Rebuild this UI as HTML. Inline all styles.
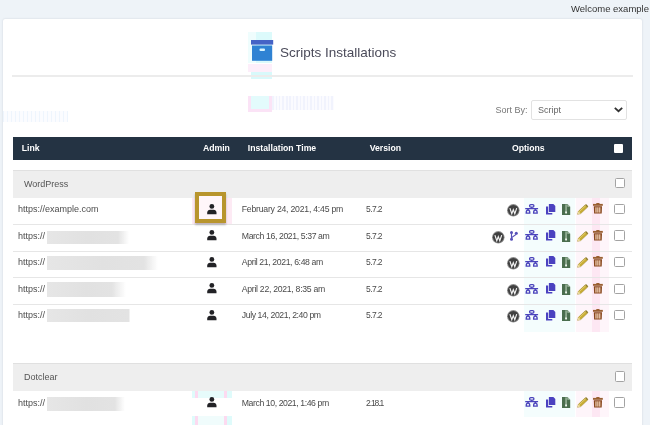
<!DOCTYPE html>
<html><head><meta charset="utf-8">
<style>
*{box-sizing:border-box;margin:0;padding:0}
html,body{width:650px;height:425px;overflow:hidden;background:#eef3f8;font-family:"Liberation Sans",sans-serif;position:relative}
.a{position:absolute;white-space:nowrap}
#welcome{left:571px;top:3px;font-size:9.5px;color:#333;line-height:11px}
#panel{left:3px;top:18.5px;width:638.5px;height:420px;background:#fff;border-radius:2px;box-shadow:0 0 2px rgba(100,110,130,.28)}
#title{left:280px;top:45px;font-size:13.5px;color:#4b4b5a;line-height:16px}
#hr{left:12px;top:75px;width:620.5px;height:2px;background:#ececec}
#sortlbl{left:495.5px;top:104.7px;font-size:9px;color:#777;line-height:11px}
#sel{left:531px;top:100px;width:96px;height:19.5px;border:1px solid #e2e2e2;border-radius:2px;background:#fff}
#seltxt{left:538px;top:105.2px;font-size:9px;color:#666;line-height:11px}
#thead{left:12.5px;top:137px;width:619.5px;height:22.5px;background:#243343}
.th{font-weight:bold;font-size:8.7px;color:#fff;line-height:11px;top:142.5px}
.grp{left:12.5px;width:619.5px;background:#eeeeee;border-top:1px solid #e0e0e0}
.gname{font-size:9px;color:#555;line-height:11px;left:24px}
.row{left:12.5px;width:619.5px;border-bottom:1px solid #e4e4e4}
.lnk{left:18px;font-size:9px;color:#4d4d4d;line-height:11px}
.blur{left:46.8px;filter:blur(0.7px)}
.dt{left:241.8px;font-size:8.7px;color:#4a4a4a;line-height:11px;letter-spacing:-0.42px}
.ver{left:366px;font-size:8.5px;color:#4a4a4a;line-height:11px;letter-spacing:-0.6px}
.cb{width:10.5px;height:10.5px;border:1px solid #a3a3a3;border-radius:1.5px;background:#fff}
svg.a{overflow:visible}
</style></head><body><div id="wrap" style="position:absolute;left:0;top:0;width:650px;height:425px;overflow:hidden;will-change:transform">
<div class="a" id="welcome">Welcome example</div>
<div class="a" id="panel"></div>


<!-- faint compression ghosts -->
<div class="a" style="left:248.4px;top:31.7px;width:23.5px;height:31.3px;background:#effdfd"></div>
<div class="a" style="left:256px;top:31.7px;width:16px;height:31.3px;background:#dcfafb"></div>
<div class="a" style="left:248.4px;top:64px;width:23.5px;height:8px;background:#fdeefa"></div>
<div class="a" style="left:251px;top:72px;width:21px;height:7px;background:#d8f9fb"></div>
<div class="a" style="left:248.4px;top:95.5px;width:23.5px;height:16.5px;border:3px solid #fbe3f6;border-top:none;background:#e3fbfc"></div>
<div class="a" style="left:272px;top:96px;width:62px;height:14px;background:repeating-linear-gradient(90deg,#f1f3fd 0 1.5px,#fbfbff 1.5px 3.5px)"></div>
<div class="a" style="left:3px;top:111px;width:65px;height:11px;background:repeating-linear-gradient(90deg,#eef5fd 0 1.5px,#fbfcff 1.5px 4px)"></div>
<div class="a" style="left:575.5px;top:192px;width:33px;height:140px;background:#fef5fa"></div>
<div class="a" style="left:591.6px;top:192px;width:8.4px;height:140px;background:#fde7f3"></div>
<div class="a" style="left:523.8px;top:192px;width:50.8px;height:140px;background:#f4fdfd"></div>
<div class="a" style="left:575.5px;top:383px;width:33px;height:34px;background:#fef5fa"></div>
<div class="a" style="left:591.6px;top:383px;width:8.4px;height:34px;background:#fde7f3"></div>
<div class="a" style="left:523.8px;top:383px;width:50.8px;height:34px;background:#f4fdfd"></div>
<div class="a" style="left:192px;top:191.5px;width:39.5px;height:32.5px;background:#fdeaf4"></div>
<div class="a" style="left:191.9px;top:383.7px;width:39.7px;height:14.3px;background:#dffbfb"></div>
<div class="a" style="left:195px;top:383.7px;width:32.4px;height:14.3px;border-left:3.5px solid #fcdaf0;border-right:3.5px solid #fcdaf0;border-top:4.3px solid #fcdaf0;background:#e6fbfb"></div>
<div class="a" style="left:191.9px;top:416px;width:39.7px;height:9px;background:#dffbfb"></div>
<div class="a" style="left:195px;top:416px;width:32.4px;height:9px;border-left:3.5px solid #fcdaf0;border-right:3.5px solid #fcdaf0;background:#f0fcfc"></div>
<!-- title icon -->
<svg class="a" style="left:251px;top:40px" width="23" height="21" viewBox="0 0 23 21">
  <rect x="0" y="0" width="22.2" height="4.6" fill="#4563c6"/>
  <rect x="1" y="5.5" width="20.2" height="15.3" fill="#2f82d3"/>
  <rect x="8.5" y="8.4" width="5.5" height="2.5" rx="1" fill="#d8f4ff"/>
</svg>
<div class="a" id="title">Scripts Installations</div>
<div class="a" id="hr"></div>

<div class="a" id="sortlbl">Sort By:</div>
<div class="a" id="sel"></div>
<div class="a" id="seltxt">Script</div>
<svg class="a" style="left:614px;top:107px" width="9" height="5" viewBox="0 0 9 5"><path d="M0.8 0.8 L4.5 4.2 L8.2 0.8" fill="none" stroke="#333" stroke-width="1.8"/></svg>

<div class="a" id="thead"></div>
<div class="a th" style="left:21.8px">Link</div>
<div class="a th" style="left:202.9px">Admin</div>
<div class="a th" style="left:247.8px">Installation Time</div>
<div class="a th" style="left:369.7px">Version</div>
<div class="a th" style="left:511.9px">Options</div>
<div class="a" style="left:613.6px;top:143.6px;width:9.3px;height:9.3px;background:#fff;border-radius:1px"></div>

<!-- WordPress group -->
<div class="a grp" style="top:169.7px;height:27.9px"></div>
<div class="a gname" style="top:179px">WordPress</div>
<div class="a cb" style="left:614.6px;top:177.7px"></div>

<div class="a" style="left:12.5px;top:223.5px;width:619.5px;height:1px;background:#e6e6e6"></div>
<div class="a lnk" style="top:204.30px">https://example.com</div>
<div class="a" style="left:195px;top:192.00px;width:31.2px;height:31.2px;border:4.4px solid #b8952d;background:#fff6fa;box-shadow:0 1.5px 2px rgba(0,0,0,.25)"></div>
<svg class="a" style="left:206.8px;top:203.6px" width="10" height="11" viewBox="0 0 10 11"><circle cx="4.85" cy="2.45" r="2.4" fill="#222226"/><path d="M0.2 10.2 V8.7 C0.2 6.9 1.5 5.7 3.1 5.7 H6.6 C8.2 5.7 9.5 6.9 9.5 8.7 V10.2 Z" fill="#222226"/></svg>
<div class="a dt" style="top:204.30px;letter-spacing:-0.23px">February 24, 2021, 4:45 pm</div>
<div class="a ver" style="top:204.30px;letter-spacing:-0.6px">5.7.2</div>
<svg class="a" style="left:507.2px;top:204.0px" width="13" height="13" viewBox="0 0 13 13"><circle cx="6.3" cy="6.3" r="6.25" fill="#8c8c8c"/><circle cx="6.3" cy="6.3" r="5.4" fill="#404040"/><path d="M2.9 4.1 L4.8 9.7 L6.3 5.6 L7.8 9.7 L9.7 4.1" fill="none" stroke="#f4f4f4" stroke-width="1.15" stroke-linejoin="miter"/></svg>
<svg class="a" style="left:525.1px;top:203.7px" width="14" height="11" viewBox="0 0 14 11"><g fill="none" stroke="#4b44bc" stroke-width="1.3"><rect x="4.6" y="0.65" width="4.3" height="2.4" rx="1.1"/><path d="M6.75 3 V4.6 M0.2 4.6 H13.1 M3 4.6 V6 M10.4 4.6 V6"/><path d="M1.2 9.1 C1.2 7 1.8 6 3 6 C4.2 6 4.8 7 4.8 9.1 Z"/><path d="M8.6 9.1 C8.6 7 9.2 6 10.4 6 C11.6 6 12.2 7 12.2 9.1 Z"/></g></svg>
<svg class="a" style="left:545.6px;top:203.5px" width="10" height="11" viewBox="0 0 10 11"><path d="M2.9 0 H7.4 L9.3 1.9 V8.1 H2.9 Z" fill="#4b42c0"/><path d="M0 2.5 H2.2 V8.9 H6.3 V10.5 H0 Z" fill="#4b42c0"/></svg>
<svg class="a" style="left:562.2px;top:203.8px" width="9" height="11" viewBox="0 0 9 11"><path d="M0 0 H5.4 L8.2 2.8 V11 H0 Z" fill="#4a6e4e"/><path d="M5.4 0 V2.8 H8.2" fill="#a3bca5"/><rect x="3.5" y="0.4" width="1.1" height="6" fill="#b9d2ba"/><path d="M4.05 5.8 L5.1 8.6 A1.05 1.05 0 1 1 3 8.6 Z" fill="#eef7ee"/></svg>
<svg class="a" style="left:576.8px;top:203.8px" width="12" height="11" viewBox="0 0 12 11"><path d="M0.6 10.3 L1.4 7.3 L8 1 L10.4 3.3 L3.7 9.6 Z" fill="#c8ac33" stroke="#96801f" stroke-width="0.5"/><path d="M8 1 L9 0.1 L11.3 2.3 L10.4 3.3 Z" fill="#8f7c2a"/><path d="M0.6 10.3 L1.4 7.3 L3.7 9.6 Z" fill="#ecdca0"/><path d="M2 7.9 L8.7 1.7" stroke="#e6d27a" stroke-width="0.8"/></svg>
<svg class="a" style="left:592.5px;top:203.2px" width="10" height="11" viewBox="0 0 10 11"><rect x="0" y="0.9" width="9.8" height="1.9" fill="#9a6032"/><rect x="3.3" y="0" width="3.2" height="1.2" fill="#9a6032"/><path d="M0.8 3.2 H9 L8.7 10.6 H1.1 Z" fill="#87461c"/><rect x="2.4" y="4.3" width="1.15" height="5.3" fill="#f8dcc4"/><rect x="4.3" y="4.3" width="1.15" height="5.3" fill="#f8dcc4"/><rect x="6.2" y="4.3" width="1.15" height="5.3" fill="#f8dcc4"/></svg>
<div class="a cb" style="left:614.3px;top:203.70px"></div>
<div class="a" style="left:12.5px;top:250.5px;width:619.5px;height:1px;background:#e6e6e6"></div>
<div class="a lnk" style="top:231.00px">https://</div>
<div class="a blur" style="top:230.8px;height:13.0px;width:82.0px;background:linear-gradient(90deg,#e6e6e6 0%,#e1e1e1 50%,#e3e3e3 86.6%,rgba(240,240,240,0) 100%)"></div>
<svg class="a" style="left:206.8px;top:230.3px" width="10" height="11" viewBox="0 0 10 11"><circle cx="4.85" cy="2.45" r="2.4" fill="#222226"/><path d="M0.2 10.2 V8.7 C0.2 6.9 1.5 5.7 3.1 5.7 H6.6 C8.2 5.7 9.5 6.9 9.5 8.7 V10.2 Z" fill="#222226"/></svg>
<div class="a dt" style="top:231.00px;letter-spacing:-0.39px">March 16, 2021, 5:37 am</div>
<div class="a ver" style="top:231.00px;letter-spacing:-0.6px">5.7.2</div>
<svg class="a" style="left:492.2px;top:230.7px" width="13" height="13" viewBox="0 0 13 13"><circle cx="6.3" cy="6.3" r="6.25" fill="#8c8c8c"/><circle cx="6.3" cy="6.3" r="5.4" fill="#404040"/><path d="M2.9 4.1 L4.8 9.7 L6.3 5.6 L7.8 9.7 L9.7 4.1" fill="none" stroke="#f4f4f4" stroke-width="1.15" stroke-linejoin="miter"/></svg>
<svg class="a" style="left:510.0px;top:230.7px" width="8" height="10" viewBox="0 0 8 10"><g fill="#5750b8"><circle cx="1.5" cy="1.5" r="1.5"/><circle cx="1.5" cy="8.3" r="1.5"/><circle cx="6.3" cy="2.2" r="1.5"/></g><path d="M1.5 1.5 V8.3 M6.3 2.2 C6.3 5.2 1.8 4.8 1.5 7.5" fill="none" stroke="#5750b8" stroke-width="1.2"/></svg>
<svg class="a" style="left:525.1px;top:230.4px" width="14" height="11" viewBox="0 0 14 11"><g fill="none" stroke="#4b44bc" stroke-width="1.3"><rect x="4.6" y="0.65" width="4.3" height="2.4" rx="1.1"/><path d="M6.75 3 V4.6 M0.2 4.6 H13.1 M3 4.6 V6 M10.4 4.6 V6"/><path d="M1.2 9.1 C1.2 7 1.8 6 3 6 C4.2 6 4.8 7 4.8 9.1 Z"/><path d="M8.6 9.1 C8.6 7 9.2 6 10.4 6 C11.6 6 12.2 7 12.2 9.1 Z"/></g></svg>
<svg class="a" style="left:545.6px;top:230.2px" width="10" height="11" viewBox="0 0 10 11"><path d="M2.9 0 H7.4 L9.3 1.9 V8.1 H2.9 Z" fill="#4b42c0"/><path d="M0 2.5 H2.2 V8.9 H6.3 V10.5 H0 Z" fill="#4b42c0"/></svg>
<svg class="a" style="left:562.2px;top:230.5px" width="9" height="11" viewBox="0 0 9 11"><path d="M0 0 H5.4 L8.2 2.8 V11 H0 Z" fill="#4a6e4e"/><path d="M5.4 0 V2.8 H8.2" fill="#a3bca5"/><rect x="3.5" y="0.4" width="1.1" height="6" fill="#b9d2ba"/><path d="M4.05 5.8 L5.1 8.6 A1.05 1.05 0 1 1 3 8.6 Z" fill="#eef7ee"/></svg>
<svg class="a" style="left:576.8px;top:230.5px" width="12" height="11" viewBox="0 0 12 11"><path d="M0.6 10.3 L1.4 7.3 L8 1 L10.4 3.3 L3.7 9.6 Z" fill="#c8ac33" stroke="#96801f" stroke-width="0.5"/><path d="M8 1 L9 0.1 L11.3 2.3 L10.4 3.3 Z" fill="#8f7c2a"/><path d="M0.6 10.3 L1.4 7.3 L3.7 9.6 Z" fill="#ecdca0"/><path d="M2 7.9 L8.7 1.7" stroke="#e6d27a" stroke-width="0.8"/></svg>
<svg class="a" style="left:592.5px;top:229.9px" width="10" height="11" viewBox="0 0 10 11"><rect x="0" y="0.9" width="9.8" height="1.9" fill="#9a6032"/><rect x="3.3" y="0" width="3.2" height="1.2" fill="#9a6032"/><path d="M0.8 3.2 H9 L8.7 10.6 H1.1 Z" fill="#87461c"/><rect x="2.4" y="4.3" width="1.15" height="5.3" fill="#f8dcc4"/><rect x="4.3" y="4.3" width="1.15" height="5.3" fill="#f8dcc4"/><rect x="6.2" y="4.3" width="1.15" height="5.3" fill="#f8dcc4"/></svg>
<div class="a cb" style="left:614.3px;top:230.40px"></div>
<div class="a" style="left:12.5px;top:277px;width:619.5px;height:1px;background:#e6e6e6"></div>
<div class="a lnk" style="top:257.20px">https://</div>
<div class="a blur" style="top:255.6px;height:14.0px;width:111.0px;background:linear-gradient(90deg,#e6e6e6 0%,#e1e1e1 50%,#e3e3e3 87.4%,rgba(240,240,240,0) 100%)"></div>
<svg class="a" style="left:206.8px;top:256.5px" width="10" height="11" viewBox="0 0 10 11"><circle cx="4.85" cy="2.45" r="2.4" fill="#222226"/><path d="M0.2 10.2 V8.7 C0.2 6.9 1.5 5.7 3.1 5.7 H6.6 C8.2 5.7 9.5 6.9 9.5 8.7 V10.2 Z" fill="#222226"/></svg>
<div class="a dt" style="top:257.20px;letter-spacing:-0.38px">April 21, 2021, 6:48 am</div>
<div class="a ver" style="top:257.20px;letter-spacing:-0.6px">5.7.2</div>
<svg class="a" style="left:507.2px;top:256.9px" width="13" height="13" viewBox="0 0 13 13"><circle cx="6.3" cy="6.3" r="6.25" fill="#8c8c8c"/><circle cx="6.3" cy="6.3" r="5.4" fill="#404040"/><path d="M2.9 4.1 L4.8 9.7 L6.3 5.6 L7.8 9.7 L9.7 4.1" fill="none" stroke="#f4f4f4" stroke-width="1.15" stroke-linejoin="miter"/></svg>
<svg class="a" style="left:525.1px;top:256.6px" width="14" height="11" viewBox="0 0 14 11"><g fill="none" stroke="#4b44bc" stroke-width="1.3"><rect x="4.6" y="0.65" width="4.3" height="2.4" rx="1.1"/><path d="M6.75 3 V4.6 M0.2 4.6 H13.1 M3 4.6 V6 M10.4 4.6 V6"/><path d="M1.2 9.1 C1.2 7 1.8 6 3 6 C4.2 6 4.8 7 4.8 9.1 Z"/><path d="M8.6 9.1 C8.6 7 9.2 6 10.4 6 C11.6 6 12.2 7 12.2 9.1 Z"/></g></svg>
<svg class="a" style="left:545.6px;top:256.4px" width="10" height="11" viewBox="0 0 10 11"><path d="M2.9 0 H7.4 L9.3 1.9 V8.1 H2.9 Z" fill="#4b42c0"/><path d="M0 2.5 H2.2 V8.9 H6.3 V10.5 H0 Z" fill="#4b42c0"/></svg>
<svg class="a" style="left:562.2px;top:256.7px" width="9" height="11" viewBox="0 0 9 11"><path d="M0 0 H5.4 L8.2 2.8 V11 H0 Z" fill="#4a6e4e"/><path d="M5.4 0 V2.8 H8.2" fill="#a3bca5"/><rect x="3.5" y="0.4" width="1.1" height="6" fill="#b9d2ba"/><path d="M4.05 5.8 L5.1 8.6 A1.05 1.05 0 1 1 3 8.6 Z" fill="#eef7ee"/></svg>
<svg class="a" style="left:576.8px;top:256.7px" width="12" height="11" viewBox="0 0 12 11"><path d="M0.6 10.3 L1.4 7.3 L8 1 L10.4 3.3 L3.7 9.6 Z" fill="#c8ac33" stroke="#96801f" stroke-width="0.5"/><path d="M8 1 L9 0.1 L11.3 2.3 L10.4 3.3 Z" fill="#8f7c2a"/><path d="M0.6 10.3 L1.4 7.3 L3.7 9.6 Z" fill="#ecdca0"/><path d="M2 7.9 L8.7 1.7" stroke="#e6d27a" stroke-width="0.8"/></svg>
<svg class="a" style="left:592.5px;top:256.1px" width="10" height="11" viewBox="0 0 10 11"><rect x="0" y="0.9" width="9.8" height="1.9" fill="#9a6032"/><rect x="3.3" y="0" width="3.2" height="1.2" fill="#9a6032"/><path d="M0.8 3.2 H9 L8.7 10.6 H1.1 Z" fill="#87461c"/><rect x="2.4" y="4.3" width="1.15" height="5.3" fill="#f8dcc4"/><rect x="4.3" y="4.3" width="1.15" height="5.3" fill="#f8dcc4"/><rect x="6.2" y="4.3" width="1.15" height="5.3" fill="#f8dcc4"/></svg>
<div class="a cb" style="left:614.3px;top:256.60px"></div>
<div class="a" style="left:12.5px;top:303.5px;width:619.5px;height:1px;background:#e6e6e6"></div>
<div class="a lnk" style="top:284.10px">https://</div>
<div class="a blur" style="top:282px;height:15.0px;width:79.0px;background:linear-gradient(90deg,#e6e6e6 0%,#e1e1e1 50%,#e3e3e3 82.3%,rgba(240,240,240,0) 100%)"></div>
<svg class="a" style="left:206.8px;top:283.4px" width="10" height="11" viewBox="0 0 10 11"><circle cx="4.85" cy="2.45" r="2.4" fill="#222226"/><path d="M0.2 10.2 V8.7 C0.2 6.9 1.5 5.7 3.1 5.7 H6.6 C8.2 5.7 9.5 6.9 9.5 8.7 V10.2 Z" fill="#222226"/></svg>
<div class="a dt" style="top:284.10px;letter-spacing:-0.29px">April 22, 2021, 8:35 am</div>
<div class="a ver" style="top:284.10px;letter-spacing:-0.6px">5.7.2</div>
<svg class="a" style="left:507.2px;top:283.8px" width="13" height="13" viewBox="0 0 13 13"><circle cx="6.3" cy="6.3" r="6.25" fill="#8c8c8c"/><circle cx="6.3" cy="6.3" r="5.4" fill="#404040"/><path d="M2.9 4.1 L4.8 9.7 L6.3 5.6 L7.8 9.7 L9.7 4.1" fill="none" stroke="#f4f4f4" stroke-width="1.15" stroke-linejoin="miter"/></svg>
<svg class="a" style="left:525.1px;top:283.5px" width="14" height="11" viewBox="0 0 14 11"><g fill="none" stroke="#4b44bc" stroke-width="1.3"><rect x="4.6" y="0.65" width="4.3" height="2.4" rx="1.1"/><path d="M6.75 3 V4.6 M0.2 4.6 H13.1 M3 4.6 V6 M10.4 4.6 V6"/><path d="M1.2 9.1 C1.2 7 1.8 6 3 6 C4.2 6 4.8 7 4.8 9.1 Z"/><path d="M8.6 9.1 C8.6 7 9.2 6 10.4 6 C11.6 6 12.2 7 12.2 9.1 Z"/></g></svg>
<svg class="a" style="left:545.6px;top:283.3px" width="10" height="11" viewBox="0 0 10 11"><path d="M2.9 0 H7.4 L9.3 1.9 V8.1 H2.9 Z" fill="#4b42c0"/><path d="M0 2.5 H2.2 V8.9 H6.3 V10.5 H0 Z" fill="#4b42c0"/></svg>
<svg class="a" style="left:562.2px;top:283.6px" width="9" height="11" viewBox="0 0 9 11"><path d="M0 0 H5.4 L8.2 2.8 V11 H0 Z" fill="#4a6e4e"/><path d="M5.4 0 V2.8 H8.2" fill="#a3bca5"/><rect x="3.5" y="0.4" width="1.1" height="6" fill="#b9d2ba"/><path d="M4.05 5.8 L5.1 8.6 A1.05 1.05 0 1 1 3 8.6 Z" fill="#eef7ee"/></svg>
<svg class="a" style="left:576.8px;top:283.6px" width="12" height="11" viewBox="0 0 12 11"><path d="M0.6 10.3 L1.4 7.3 L8 1 L10.4 3.3 L3.7 9.6 Z" fill="#c8ac33" stroke="#96801f" stroke-width="0.5"/><path d="M8 1 L9 0.1 L11.3 2.3 L10.4 3.3 Z" fill="#8f7c2a"/><path d="M0.6 10.3 L1.4 7.3 L3.7 9.6 Z" fill="#ecdca0"/><path d="M2 7.9 L8.7 1.7" stroke="#e6d27a" stroke-width="0.8"/></svg>
<svg class="a" style="left:592.5px;top:283.0px" width="10" height="11" viewBox="0 0 10 11"><rect x="0" y="0.9" width="9.8" height="1.9" fill="#9a6032"/><rect x="3.3" y="0" width="3.2" height="1.2" fill="#9a6032"/><path d="M0.8 3.2 H9 L8.7 10.6 H1.1 Z" fill="#87461c"/><rect x="2.4" y="4.3" width="1.15" height="5.3" fill="#f8dcc4"/><rect x="4.3" y="4.3" width="1.15" height="5.3" fill="#f8dcc4"/><rect x="6.2" y="4.3" width="1.15" height="5.3" fill="#f8dcc4"/></svg>
<div class="a cb" style="left:614.3px;top:283.50px"></div>
<div class="a lnk" style="top:310.30px">https://</div>
<div class="a blur" style="top:309px;height:13.0px;width:83.0px;background:linear-gradient(90deg,#e6e6e6 0%,#e1e1e1 50%,#e3e3e3 98.8%,rgba(240,240,240,0) 100%)"></div>
<svg class="a" style="left:206.8px;top:309.6px" width="10" height="11" viewBox="0 0 10 11"><circle cx="4.85" cy="2.45" r="2.4" fill="#222226"/><path d="M0.2 10.2 V8.7 C0.2 6.9 1.5 5.7 3.1 5.7 H6.6 C8.2 5.7 9.5 6.9 9.5 8.7 V10.2 Z" fill="#222226"/></svg>
<div class="a dt" style="top:310.30px;letter-spacing:-0.41px">July 14, 2021, 2:40 pm</div>
<div class="a ver" style="top:310.30px;letter-spacing:-0.6px">5.7.2</div>
<svg class="a" style="left:507.2px;top:310.0px" width="13" height="13" viewBox="0 0 13 13"><circle cx="6.3" cy="6.3" r="6.25" fill="#8c8c8c"/><circle cx="6.3" cy="6.3" r="5.4" fill="#404040"/><path d="M2.9 4.1 L4.8 9.7 L6.3 5.6 L7.8 9.7 L9.7 4.1" fill="none" stroke="#f4f4f4" stroke-width="1.15" stroke-linejoin="miter"/></svg>
<svg class="a" style="left:525.1px;top:309.7px" width="14" height="11" viewBox="0 0 14 11"><g fill="none" stroke="#4b44bc" stroke-width="1.3"><rect x="4.6" y="0.65" width="4.3" height="2.4" rx="1.1"/><path d="M6.75 3 V4.6 M0.2 4.6 H13.1 M3 4.6 V6 M10.4 4.6 V6"/><path d="M1.2 9.1 C1.2 7 1.8 6 3 6 C4.2 6 4.8 7 4.8 9.1 Z"/><path d="M8.6 9.1 C8.6 7 9.2 6 10.4 6 C11.6 6 12.2 7 12.2 9.1 Z"/></g></svg>
<svg class="a" style="left:545.6px;top:309.5px" width="10" height="11" viewBox="0 0 10 11"><path d="M2.9 0 H7.4 L9.3 1.9 V8.1 H2.9 Z" fill="#4b42c0"/><path d="M0 2.5 H2.2 V8.9 H6.3 V10.5 H0 Z" fill="#4b42c0"/></svg>
<svg class="a" style="left:562.2px;top:309.8px" width="9" height="11" viewBox="0 0 9 11"><path d="M0 0 H5.4 L8.2 2.8 V11 H0 Z" fill="#4a6e4e"/><path d="M5.4 0 V2.8 H8.2" fill="#a3bca5"/><rect x="3.5" y="0.4" width="1.1" height="6" fill="#b9d2ba"/><path d="M4.05 5.8 L5.1 8.6 A1.05 1.05 0 1 1 3 8.6 Z" fill="#eef7ee"/></svg>
<svg class="a" style="left:576.8px;top:309.8px" width="12" height="11" viewBox="0 0 12 11"><path d="M0.6 10.3 L1.4 7.3 L8 1 L10.4 3.3 L3.7 9.6 Z" fill="#c8ac33" stroke="#96801f" stroke-width="0.5"/><path d="M8 1 L9 0.1 L11.3 2.3 L10.4 3.3 Z" fill="#8f7c2a"/><path d="M0.6 10.3 L1.4 7.3 L3.7 9.6 Z" fill="#ecdca0"/><path d="M2 7.9 L8.7 1.7" stroke="#e6d27a" stroke-width="0.8"/></svg>
<svg class="a" style="left:592.5px;top:309.2px" width="10" height="11" viewBox="0 0 10 11"><rect x="0" y="0.9" width="9.8" height="1.9" fill="#9a6032"/><rect x="3.3" y="0" width="3.2" height="1.2" fill="#9a6032"/><path d="M0.8 3.2 H9 L8.7 10.6 H1.1 Z" fill="#87461c"/><rect x="2.4" y="4.3" width="1.15" height="5.3" fill="#f8dcc4"/><rect x="4.3" y="4.3" width="1.15" height="5.3" fill="#f8dcc4"/><rect x="6.2" y="4.3" width="1.15" height="5.3" fill="#f8dcc4"/></svg>
<div class="a cb" style="left:614.3px;top:309.70px"></div>
<div class="a lnk" style="top:397.60px">https://</div>
<div class="a blur" style="top:396.9px;height:13.9px;width:78.4px;background:linear-gradient(90deg,#e6e6e6 0%,#e1e1e1 50%,#e3e3e3 86.7%,rgba(240,240,240,0) 100%)"></div>
<svg class="a" style="left:206.8px;top:396.9px" width="10" height="11" viewBox="0 0 10 11"><circle cx="4.85" cy="2.45" r="2.4" fill="#222226"/><path d="M0.2 10.2 V8.7 C0.2 6.9 1.5 5.7 3.1 5.7 H6.6 C8.2 5.7 9.5 6.9 9.5 8.7 V10.2 Z" fill="#222226"/></svg>
<div class="a dt" style="top:397.60px;letter-spacing:-0.42px">March 10, 2021, 1:46 pm</div>
<div class="a ver" style="top:397.60px;letter-spacing:-1.1px">2.18.1</div>
<svg class="a" style="left:525.1px;top:397.0px" width="14" height="11" viewBox="0 0 14 11"><g fill="none" stroke="#4b44bc" stroke-width="1.3"><rect x="4.6" y="0.65" width="4.3" height="2.4" rx="1.1"/><path d="M6.75 3 V4.6 M0.2 4.6 H13.1 M3 4.6 V6 M10.4 4.6 V6"/><path d="M1.2 9.1 C1.2 7 1.8 6 3 6 C4.2 6 4.8 7 4.8 9.1 Z"/><path d="M8.6 9.1 C8.6 7 9.2 6 10.4 6 C11.6 6 12.2 7 12.2 9.1 Z"/></g></svg>
<svg class="a" style="left:545.6px;top:396.8px" width="10" height="11" viewBox="0 0 10 11"><path d="M2.9 0 H7.4 L9.3 1.9 V8.1 H2.9 Z" fill="#4b42c0"/><path d="M0 2.5 H2.2 V8.9 H6.3 V10.5 H0 Z" fill="#4b42c0"/></svg>
<svg class="a" style="left:562.2px;top:397.1px" width="9" height="11" viewBox="0 0 9 11"><path d="M0 0 H5.4 L8.2 2.8 V11 H0 Z" fill="#4a6e4e"/><path d="M5.4 0 V2.8 H8.2" fill="#a3bca5"/><rect x="3.5" y="0.4" width="1.1" height="6" fill="#b9d2ba"/><path d="M4.05 5.8 L5.1 8.6 A1.05 1.05 0 1 1 3 8.6 Z" fill="#eef7ee"/></svg>
<svg class="a" style="left:576.8px;top:397.1px" width="12" height="11" viewBox="0 0 12 11"><path d="M0.6 10.3 L1.4 7.3 L8 1 L10.4 3.3 L3.7 9.6 Z" fill="#c8ac33" stroke="#96801f" stroke-width="0.5"/><path d="M8 1 L9 0.1 L11.3 2.3 L10.4 3.3 Z" fill="#8f7c2a"/><path d="M0.6 10.3 L1.4 7.3 L3.7 9.6 Z" fill="#ecdca0"/><path d="M2 7.9 L8.7 1.7" stroke="#e6d27a" stroke-width="0.8"/></svg>
<svg class="a" style="left:592.5px;top:396.5px" width="10" height="11" viewBox="0 0 10 11"><rect x="0" y="0.9" width="9.8" height="1.9" fill="#9a6032"/><rect x="3.3" y="0" width="3.2" height="1.2" fill="#9a6032"/><path d="M0.8 3.2 H9 L8.7 10.6 H1.1 Z" fill="#87461c"/><rect x="2.4" y="4.3" width="1.15" height="5.3" fill="#f8dcc4"/><rect x="4.3" y="4.3" width="1.15" height="5.3" fill="#f8dcc4"/><rect x="6.2" y="4.3" width="1.15" height="5.3" fill="#f8dcc4"/></svg>
<div class="a cb" style="left:614.3px;top:397.00px"></div>

<!-- Dotclear group -->
<div class="a grp" style="top:362.7px;height:28px"></div>
<div class="a gname" style="top:372px">Dotclear</div>
<div class="a cb" style="left:614.5px;top:371.3px"></div>

</div></body></html>
